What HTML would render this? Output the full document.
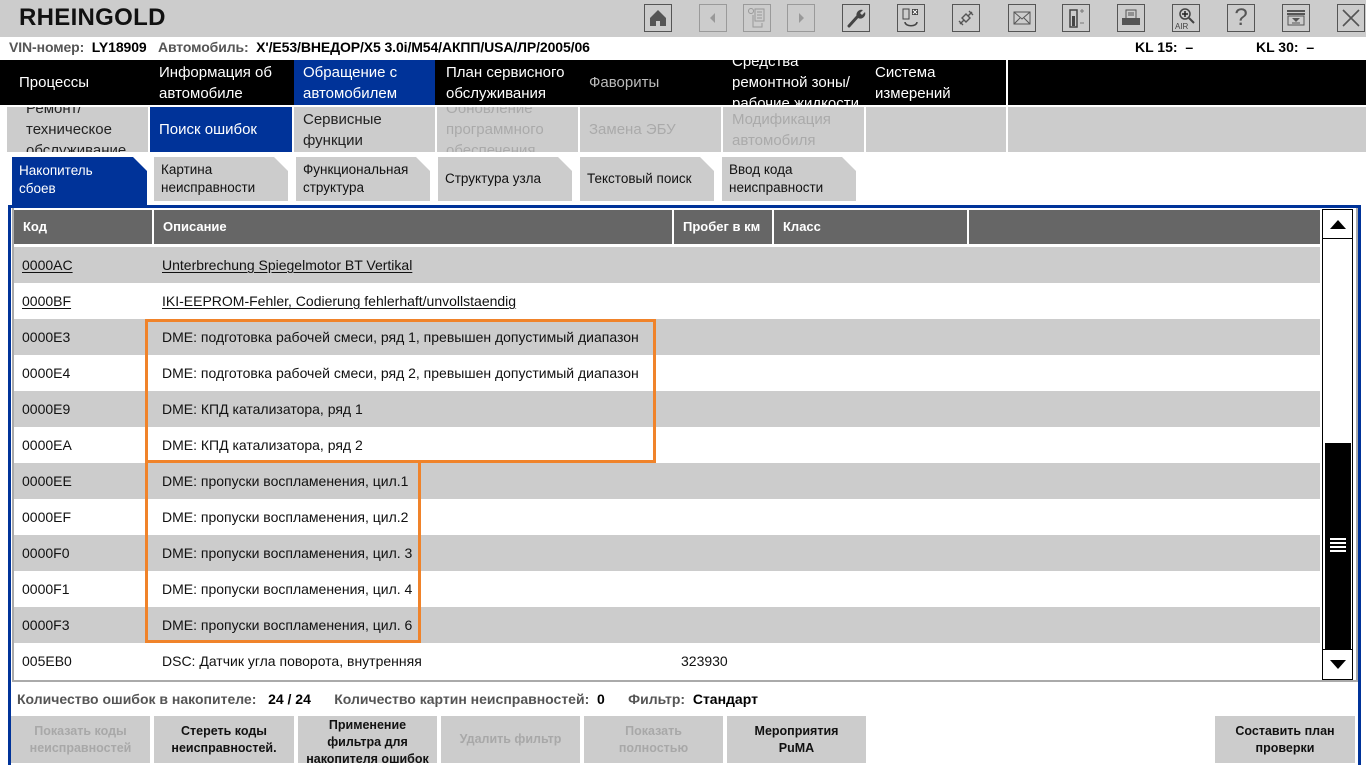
<!DOCTYPE html>
<html><head><meta charset="utf-8"><style>
*{margin:0;padding:0;box-sizing:border-box}
body{width:1366px;height:763px;overflow:hidden;background:#fff;font-family:"Liberation Sans",Arial,sans-serif;position:relative}
.a{position:absolute}
.ic{position:absolute;top:4px;width:28px;height:28px;border:1px solid #555;display:flex;align-items:center;justify-content:center}
.ic.d{border-color:#9a9a9a}
.n1{position:absolute;top:60px;height:45px;background:#000;color:#fff;font-size:15px;line-height:21px;padding-left:9px;display:flex;align-items:center;overflow:hidden}
.n2{position:absolute;top:107px;height:45px;background:#ccc;color:#222;font-size:15px;line-height:21px;padding-left:9px;display:flex;align-items:center;overflow:hidden}
.tab{position:absolute;top:157px;height:44px;width:134px;background:#ccc;color:#111;font-size:13.5px;line-height:18px;padding-left:7px;display:flex;align-items:center;clip-path:polygon(0 0,calc(100% - 14px) 0,100% 14px,100% 100%,0 100%)}
.hd{position:absolute;top:210px;height:34px;background:#666;color:#fff;font-weight:bold;font-size:13px;line-height:34px;padding-left:9px}
.row{position:absolute;left:14px;width:1306px;height:36px;font-size:14px;line-height:37px;color:#111}
.row.g{background:#ccc}
.row span{position:absolute}
.row u{text-underline-offset:2px}
.btn{position:absolute;top:716px;height:47px;background:#ccc;font-size:12.5px;font-weight:bold;line-height:17px;text-align:center;display:flex;align-items:center;justify-content:center;color:#111;overflow:hidden}
.btn.d{color:#a8a8a8}
.ob{position:absolute;border:3px solid #f0832a}
</style></head><body>
<div class="a" style="left:0;top:0;width:1366px;height:37px;background:#ccc"></div>
<div class="a" style="left:19px;top:4px;font-size:24px;font-weight:bold;color:#111;letter-spacing:0.3px">RHEINGOLD</div>
<div class="ic" style="left:644px"><svg width="18" height="18" viewBox="0 0 18 18"><path d="M1 9L9 1L17 9V17H11V12H7V17H1Z" fill="#555"/><rect x="7.5" y="12" width="3" height="3" fill="#ccc"/></svg></div>
<div class="ic d" style="left:699px"><svg width="10" height="12"><path d="M7 1L2 6L7 11Z" fill="#999"/></svg></div>
<div class="ic d" style="left:743px"><svg width="20" height="22" viewBox="0 0 20 22" fill="none" stroke="#999"><circle cx="4" cy="4" r="2.5"/><rect x="8" y="2" width="9" height="12"/><path d="M10 5h5M10 8h5M10 11h5M6 8v12h9v-4"/></svg></div>
<div class="ic d" style="left:787px"><svg width="10" height="12"><path d="M3 1L8 6L3 11Z" fill="#999"/></svg></div>
<div class="ic" style="left:842px"><svg width="20" height="20" viewBox="0 0 20 20"><path d="M3 18L12 8" stroke="#444" stroke-width="3" stroke-linecap="round"/><path d="M11 9A5 5 0 0 1 17 2L14 5L16 7L19 4A5 5 0 0 1 12 10Z" fill="#444"/></svg></div>
<div class="ic" style="left:897px"><svg width="20" height="22" viewBox="0 0 20 22"><rect x="2" y="2" width="6" height="10" fill="none" stroke="#444"/><rect x="11" y="2" width="6" height="6" fill="#444"/><path d="M12 3l4 4M16 3l-4 4" stroke="#fff"/><path d="M4 15c0 5 12 5 12 0" fill="none" stroke="#444" stroke-width="1.5"/></svg></div>
<div class="ic" style="left:952px"><svg width="20" height="20" viewBox="0 0 20 20" fill="none" stroke="#555" stroke-width="1.4"><path d="M6 10L10 6L14 10L10 14Z"/><path d="M12 8L16 4M13 3l4 4M8 12L4 16M3 13l4 4"/></svg></div>
<div class="ic" style="left:1008px"><svg width="18" height="14" viewBox="0 0 18 14" fill="none" stroke="#555"><rect x="1" y="1" width="16" height="12"/><path d="M1 1L9 8L17 1M1 13L7 7M17 13L11 7"/></svg></div>
<div class="ic" style="left:1062px"><svg width="18" height="22" viewBox="0 0 18 22"><rect x="3" y="3" width="7" height="17" fill="none" stroke="#444" stroke-width="1.5"/><rect x="5" y="9" width="3" height="10" fill="#444"/><path d="M13 4h4M15 2v4M13 16h4" stroke="#777"/></svg></div>
<div class="ic" style="left:1117px"><svg width="20" height="18" viewBox="0 0 20 18"><rect x="5" y="1" width="10" height="9" fill="none" stroke="#555"/><path d="M7 4h6M7 6h6" stroke="#555"/><rect x="1" y="9" width="18" height="7" fill="#555"/></svg></div>
<div class="ic" style="left:1172px"><svg width="24" height="24" viewBox="0 0 24 24"><circle cx="11" cy="8" r="5" fill="none" stroke="#444" stroke-width="1.5"/><path d="M11 5v6M8 8h6" stroke="#222" stroke-width="1.5"/><path d="M15 12l5 5" stroke="#444" stroke-width="2"/><text x="1" y="23" font-size="8" font-family="Liberation Sans" fill="#444">AIR</text></svg></div>
<div class="ic" style="left:1227px;font-size:24px;color:#555">?</div>
<div class="ic" style="left:1282px"><svg width="20" height="18" viewBox="0 0 20 18"><path d="M1 2h18M1 5h18" stroke="#555" stroke-width="2"/><rect x="2" y="7" width="16" height="9" fill="none" stroke="#555"/><path d="M6 9h8L10 13Z" fill="#555"/><path d="M6 14h8" stroke="#555"/></svg></div>
<div class="ic" style="left:1337px"><svg width="20" height="20"><path d="M2 2L18 18M18 2L2 18" stroke="#555" stroke-width="1.6"/></svg></div>

<div class="a" style="left:9px;top:39px;font-size:14px;font-weight:bold;color:#555;white-space:nowrap;letter-spacing:-0.1px">VIN-номер:&nbsp; <span style="color:#000">LY18909</span> &nbsp;&nbsp;Автомобиль:&nbsp; <span style="color:#000">X'/E53/ВНЕДОР/X5 3.0i/M54/АКПП/USA/ЛР/2005/06</span></div>
<div class="a" style="left:1135px;top:39px;font-size:14px;font-weight:bold;color:#000">KL 15:&nbsp; –</div>
<div class="a" style="left:1256px;top:39px;font-size:14px;font-weight:bold;color:#000">KL 30:&nbsp; –</div>

<div class="a" style="left:0;top:60px;width:1366px;height:45px;background:#000"></div>
<div class="n1" style="left:0;width:148px;padding-left:19px">Процессы</div>
<div class="n1" style="left:150px;width:142px">Информация об<br>автомобиле</div>
<div class="n1" style="left:294px;width:141px;background:#003399">Обращение с<br>автомобилем</div>
<div class="n1" style="left:437px;width:141px">План сервисного<br>обслуживания</div>
<div class="n1" style="left:580px;width:141px;color:#bbb">Фавориты</div>
<div class="n1" style="left:723px;width:141px">Средства<br>ремонтной зоны/<br>рабочие жидкости</div>
<div class="n1" style="left:866px;width:140px">Система<br>измерений</div>
<div class="a" style="left:1006px;top:60px;width:2px;height:45px;background:#fff"></div>

<div class="n2" style="left:7px;width:141px;padding-left:19px">Ремонт/<br>техническое<br>обслуживание</div>
<div class="n2" style="left:150px;width:142px;background:#003399;color:#fff">Поиск ошибок</div>
<div class="n2" style="left:294px;width:141px">Сервисные<br>функции</div>
<div class="n2" style="left:437px;width:141px;color:#aaa">Обновление<br>программного<br>обеспечения</div>
<div class="n2" style="left:580px;width:141px;color:#aaa">Замена ЭБУ</div>
<div class="n2" style="left:723px;width:141px;color:#aaa">Модификация<br>автомобиля</div>
<div class="n2" style="left:866px;width:140px"></div>
<div class="n2" style="left:1008px;width:358px"></div>

<div class="tab" style="left:12px;width:135px;height:49px;background:#003399;color:#fff;align-items:flex-start;padding-top:5px">Накопитель<br>сбоев</div>
<div class="tab" style="left:154px">Картина<br>неисправности</div>
<div class="tab" style="left:296px">Функциональная<br>структура</div>
<div class="tab" style="left:438px">Структура узла</div>
<div class="tab" style="left:580px">Текстовый поиск</div>
<div class="tab" style="left:722px">Ввод кода<br>неисправности</div>

<div class="a" style="left:8px;top:205px;width:1353px;height:560px;border:3px solid #003399;border-bottom:none"></div>
<div class="a" style="left:12px;top:208px;width:1346px;height:474px;border:2px solid #aaa;border-top:none"></div>

<div class="hd" style="left:14px;width:138px">Код</div>
<div class="hd" style="left:154px;width:518px">Описание</div>
<div class="hd" style="left:674px;width:98px">Пробег в км</div>
<div class="hd" style="left:774px;width:193px">Класс</div>
<div class="hd" style="left:969px;width:351px"></div>

<div class="row g" style="top:247px"><span style="left:8px"><u>0000AC</u></span><span style="left:148px"><u>Unterbrechung Spiegelmotor BT Vertikal</u></span></div>
<div class="row" style="top:283px"><span style="left:8px"><u>0000BF</u></span><span style="left:148px"><u>IKI-EEPROM-Fehler, Codierung fehlerhaft/unvollstaendig</u></span></div>
<div class="row g" style="top:319px"><span style="left:8px">0000E3</span><span style="left:148px">DME: подготовка рабочей смеси, ряд 1, превышен допустимый диапазон</span></div>
<div class="row" style="top:355px"><span style="left:8px">0000E4</span><span style="left:148px">DME: подготовка рабочей смеси, ряд 2, превышен допустимый диапазон</span></div>
<div class="row g" style="top:391px"><span style="left:8px">0000E9</span><span style="left:148px">DME: КПД катализатора, ряд 1</span></div>
<div class="row" style="top:427px"><span style="left:8px">0000EA</span><span style="left:148px">DME: КПД катализатора, ряд 2</span></div>
<div class="row g" style="top:463px"><span style="left:8px">0000EE</span><span style="left:148px">DME: пропуски воспламенения, цил.1</span></div>
<div class="row" style="top:499px"><span style="left:8px">0000EF</span><span style="left:148px">DME: пропуски воспламенения, цил.2</span></div>
<div class="row g" style="top:535px"><span style="left:8px">0000F0</span><span style="left:148px">DME: пропуски воспламенения, цил. 3</span></div>
<div class="row" style="top:571px"><span style="left:8px">0000F1</span><span style="left:148px">DME: пропуски воспламенения, цил. 4</span></div>
<div class="row g" style="top:607px"><span style="left:8px">0000F3</span><span style="left:148px">DME: пропуски воспламенения, цил. 6</span></div>
<div class="row" style="top:643px"><span style="left:8px">005EB0</span><span style="left:148px">DSC: Датчик угла поворота, внутренняя</span><span style="left:667px">323930</span></div>

<div class="ob" style="left:145px;top:319px;width:511px;height:144px"></div>
<div class="ob" style="left:145px;top:460px;width:276px;height:183px"></div>

<div class="a" style="left:1322px;top:209px;width:31px;height:471px;border:1px solid #000;background:#fff"></div>
<div class="a" style="left:1322px;top:209px;width:31px;height:30px;border:1px solid #000;display:flex;align-items:center;justify-content:center"><svg width="16" height="9"><path d="M0 9L8 0L16 9Z" fill="#000"/></svg></div>
<div class="a" style="left:1325px;top:443px;width:26px;height:207px;background:#000"></div>
<div class="a" style="left:1330px;top:538px;width:16px;height:15px;background:repeating-linear-gradient(#fff 0 2px,transparent 2px 4px)"></div>
<div class="a" style="left:1322px;top:649px;width:31px;height:31px;border:1px solid #000;display:flex;align-items:center;justify-content:center"><svg width="16" height="9"><path d="M0 0L8 9L16 0Z" fill="#000"/></svg></div>

<div class="a" style="left:17px;top:691px;font-size:14px;font-weight:bold;color:#555;white-space:nowrap">Количество ошибок в накопителе:&nbsp;&nbsp; <span style="color:#000">24 / 24</span>&nbsp;&nbsp;&nbsp;&nbsp;&nbsp; Количество картин неисправностей:&nbsp; <span style="color:#000">0</span>&nbsp;&nbsp;&nbsp;&nbsp;&nbsp; Фильтр:&nbsp; <span style="color:#000">Стандарт</span></div>

<div class="btn d" style="left:11px;width:139px">Показать коды<br>неисправностей</div>
<div class="btn" style="left:154px;width:140px">Стереть коды<br>неисправностей.</div>
<div class="btn" style="left:298px;width:139px;padding-top:6px">Применение<br>фильтра для<br>накопителя ошибок</div>
<div class="btn d" style="left:441px;width:139px">Удалить фильтр</div>
<div class="btn d" style="left:584px;width:139px">Показать<br>полностью</div>
<div class="btn" style="left:727px;width:139px">Мероприятия<br>PuMA</div>
<div class="btn" style="left:1215px;width:140px">Составить план<br>проверки</div>
</body></html>
